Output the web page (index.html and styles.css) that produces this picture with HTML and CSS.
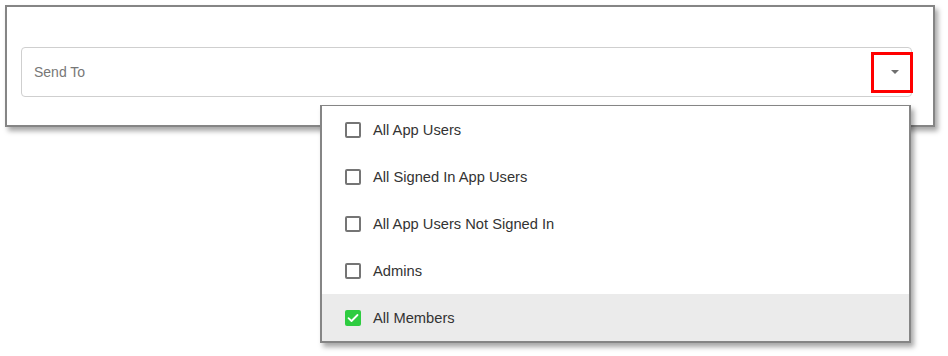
FILE: index.html
```html
<!DOCTYPE html>
<html lang="en">
<head>
    <meta charset="UTF-8">
    <meta name="viewport" content="width=device-width, initial-scale=1.0">
    <title>Send To</title>
    <link rel="stylesheet" href="styles.css">
</head>
<body>
    <div class="page">
        <div class="card">
            <div class="select-field">
                <span class="placeholder">Send To</span>
                <span class="toggle">
                    <svg width="8" height="4" viewBox="0 0 8 4"><path d="M0 0 L8 0 L4 4 Z" fill="#6f6f6f"/></svg>
                </span>
            </div>
        </div>

        <!-- Dropdown menu -->
        <ul class="menu">
            <li class="menu-item"><span class="box"></span>All App Users</li>
            <li class="menu-item"><span class="box"></span>All Signed In App Users</li>
            <li class="menu-item"><span class="box"></span>All App Users Not Signed In</li>
            <li class="menu-item"><span class="box"></span>Admins</li>
            <li class="menu-item selected">
                <span class="box checked">
                    <svg width="12" height="10" viewBox="0 0 12 10"><path d="M1.5 5.2 L4.5 8 L10.5 2" fill="none" stroke="#fff" stroke-width="1.8" stroke-linecap="round" stroke-linejoin="round"/></svg>
                </span>All Members
            </li>
        </ul>
    </div>
</body>
</html>
```

FILE: styles.css
```css
/* General Styles */
* {
    margin: 0;
    padding: 0;
    box-sizing: border-box;
}

body {
    font-family: "Liberation Sans", Arial, sans-serif;
    background-color: #fff;
}

.page {
    position: relative;
    padding: 5px;
    height: 356px;
}

/* Card */
.card {
    width: 930px;
    height: 122px;
    border: 2px solid #858585;
    background-color: #fff;
    padding: 40px 21px 28px 14px;
    box-shadow: 3px 4px 5px rgba(0, 0, 0, 0.35);
}

.select-field {
    display: flex;
    align-items: center;
    justify-content: space-between;
    height: 50px;
    border: 1px solid #cfcfcf;
    border-radius: 4px;
    padding-left: 12px;
}

.placeholder {
    font-size: 14px;
    color: #777;
}

.toggle {
    display: flex;
    align-items: center;
    justify-content: center;
    width: 42px;
    height: 41px;
    border: 3px solid #f00;
    padding-left: 5px;
    margin-right: -2px;
}

/* Menu */
.menu {
    position: absolute;
    left: 320px;
    top: 105px;
    width: 591px;
    list-style: none;
    border: 2px solid #858585;
    border-top-width: 1px;
    background-color: #fff;
    box-shadow: 3px 4px 5px rgba(0, 0, 0, 0.35);
}

.menu-item {
    display: flex;
    align-items: center;
    height: 47px;
    padding-left: 23px;
    font-size: 14.7px;
    color: #333;
}

.menu-item.selected {
    background-color: #ebebeb;
}

.box {
    display: flex;
    align-items: center;
    justify-content: center;
    width: 16px;
    height: 16px;
    border: 2px solid #757575;
    border-radius: 2px;
    margin-right: 12px;
}

.box.checked {
    border: none;
    background-color: #2ecc40;
}
```
